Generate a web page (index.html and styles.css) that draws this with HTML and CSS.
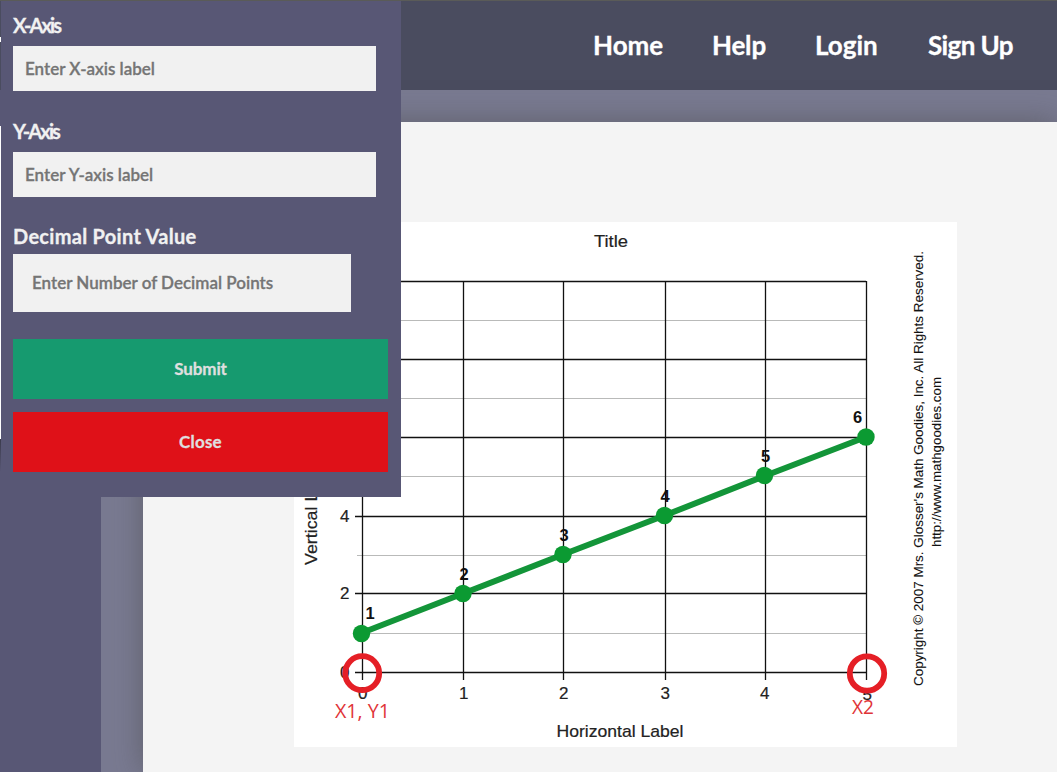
FILE: index.html
```
<!DOCTYPE html>
<html lang="en">
<head>
<meta charset="utf-8">
<title>Graph labels</title>
<link rel="stylesheet" href="styles.css">
</head>
<body>
<div class="page">
  <header class="topbar">
    <nav class="nav">
      <a class="home">Home</a><a class="help">Help</a><a class="login">Login</a><a class="signup">Sign Up</a>
    </nav>
  </header>
  <div class="content">
    <aside class="sidebar"></aside>
    <main class="sheet">
      <svg class="chart" viewBox="294 222 663 525" width="663" height="525">
        <rect x="294" y="222" width="663" height="525" fill="#fff"/>
        <g class="minor">
          <path d="M357 320.5H866M357 398.5H866M357 476.5H866M357 555.5H866M357 633.5H866"/>
        </g>
        <g class="major">
          <path d="M355 281.5H866M355 359.5H866M355 437.5H866M355 516.5H866M355 593.5H866M355 672.5H866"/>
          <path d="M362.5 281V680M463.5 281V680M563.5 281V680M665.5 281V680M765.5 281V680M866.5 281V680"/>
        </g>
        <g class="label">
          <text x="594" y="247" textLength="34" lengthAdjust="spacingAndGlyphs">Title</text>
          <text x="556.5" y="737" textLength="127" lengthAdjust="spacingAndGlyphs">Horizontal Label</text>
          <text transform="translate(316.5 565) rotate(-90)" textLength="107" lengthAdjust="spacingAndGlyphs">Vertical Label</text>
          <text x="340" y="522">4</text><text x="340" y="599">2</text><text x="340" y="678">0</text>
          <text x="358" y="699">0</text><text x="459" y="699">1</text><text x="559" y="699">2</text>
          <text x="660.5" y="699">3</text><text x="760" y="699">4</text><text x="862.5" y="700">5</text>
        </g>
        <g class="credit">
          <text transform="translate(923 686) rotate(-90)" textLength="435" lengthAdjust="spacingAndGlyphs">Copyright © 2007 Mrs. Glosser's Math Goodies, Inc. All Rights Reserved.</text>
          <text transform="translate(941 547) rotate(-90)" textLength="170" lengthAdjust="spacingAndGlyphs">http://www.mathgoodies.com</text>
        </g>
        <polyline class="series" points="361.5,633 463,593.5 563,554.5 664.5,515.5 764.5,476 866,437"/>
        <g class="dots">
          <circle cx="361.5" cy="633.5" r="8.7"/><circle cx="463" cy="593.5" r="8.7"/><circle cx="563" cy="554.5" r="8.7"/>
          <circle cx="664.5" cy="515.5" r="8.7"/><circle cx="764.5" cy="475.5" r="8.7"/><circle cx="866" cy="437" r="8.7"/>
        </g>
        <g class="value">
          <text x="365.5" y="619">1</text><text x="459.5" y="579.5">2</text><text x="559.5" y="541">3</text>
          <text x="660.5" y="502">4</text><text x="761" y="462">5</text><text x="853" y="423">6</text>
        </g>
        <g class="rings"><circle cx="362.2" cy="673.2" r="17"/><circle cx="867" cy="673.5" r="17.2"/></g>
        <g class="point">
          <text x="335" y="718" textLength="55" lengthAdjust="spacingAndGlyphs">X1, Y1</text>
          <text x="852" y="713.5" textLength="22" lengthAdjust="spacingAndGlyphs">X2</text>
        </g>
      </svg>
    </main>
  </div>
  <div class="edge"></div>
  <form class="dialog">
    <label class="lx">X-Axis</label>
    <input class="field px" placeholder="Enter X-axis label">
    <label class="ly">Y-Axis</label>
    <input class="field py" placeholder="Enter Y-axis label">
    <label class="ld">Decimal Point Value</label>
    <input class="field wide pd" placeholder="Enter Number of Decimal Points">
    <button type="button" class="submit">Submit</button>
    <button type="button" class="close">Close</button>
  </form>
</div>
</body>
</html>
```
FILE: styles.css
```
* { box-sizing: border-box; }
body { margin: 0; font-family: Lato, "Open Sans", sans-serif; overflow: hidden; }
.page { position: relative; width: 1057px; height: 772px; overflow: hidden; background: #797a91; display: flex; flex-direction: column; }
.topbar { height: 90px; flex: none; background: #4a4c5f; border-top: 1px solid #5a5b58; }
.nav { display: flex; justify-content: flex-end; gap: 49px; padding: 26px 43px 0 0; }
.nav a { color: #fff; font-size: 26px; line-height: 36px; font-weight: 700; white-space: nowrap; -webkit-text-stroke: 0.3px #fff; }
.home { width: 70px; }
.help { width: 54px; letter-spacing: -0.2px; }
.login { width: 64px; }
.signup { width: 86px; letter-spacing: -0.6px; }
.content { flex: 1; display: flex; gap: 42px; }
.sidebar { width: 101px; background: #585775; }
.sheet { flex: 1; margin-top: 32px; padding: 100px 0 0 151px; background: #f4f4f4; box-shadow: 0 0 28px rgba(75, 75, 75, .55); }
.chart { display: block; }
.minor { stroke: #b9bab9; stroke-width: 1; }
.major { stroke: #111; stroke-width: 1.3; fill: none; }
.label { font: 17px "Liberation Sans", Arial, sans-serif; fill: #222; stroke: #222; stroke-width: 0.2; }
.credit { font: 13.2px "Liberation Sans", Arial, sans-serif; fill: #111; stroke: #111; stroke-width: 0.1; }
.series { fill: none; stroke: #139539; stroke-width: 6; }
.dots { fill: #0b9a32; }
.value { font: bold 16.5px "Liberation Sans", Arial, sans-serif; fill: #111; }
.rings { fill: none; stroke: #e51f26; stroke-width: 5.8; }
.point { font: 19.5px "Open Sans", sans-serif; fill: #df3438; }
.edge { position: absolute; left: 0; top: 37px; width: 1px; height: 435px; background: linear-gradient(#fff 5px, #4a4c5f 5px 53px, #585775 53px 89px, #fff 89px 402px, #3b3b4c 402px, #585775 435px); }
.dialog { position: absolute; left: 1px; top: 1px; width: 400px; height: 496px; padding: 9px 13px 0 12px; background: #585775; display: flex; flex-direction: column; }
.dialog label { flex: none; color: #f1f1f1; font-size: 20px; font-weight: 700; line-height: 30px; white-space: nowrap; -webkit-text-stroke: 0.3px #f1f1f1; }
.dialog .lx { height: 36px; letter-spacing: -1.9px; }
.dialog .ly { height: 36px; letter-spacing: -1.9px; }
.dialog .ld { height: 32px; line-height: 28px; letter-spacing: 0.3px; }
.field { width: 363px; height: 45px; margin: 0 0 25px; padding: 0 12px 1px; border: 0; background: #f1f1f1; font: 600 17px Lato, sans-serif; flex: none; }
.field::placeholder { color: #757575; opacity: 1; -webkit-text-stroke: 0.3px #757575; }
.pd { width: 338px; height: 58px; padding: 0 19px 1px; margin-bottom: 27px; }
.dialog button { width: 375px; height: 60px; flex: none; border: 0; padding: 0 0 2px; margin: 0 0 13px; color: #dfdfdf; font: 700 17px Lato, sans-serif; -webkit-text-stroke: 0.3px #dfdfdf; }
.dialog .submit { background: #169a6f; letter-spacing: -0.1px; }
.dialog .close { background: #df1118; letter-spacing: 0.2px; }
```
